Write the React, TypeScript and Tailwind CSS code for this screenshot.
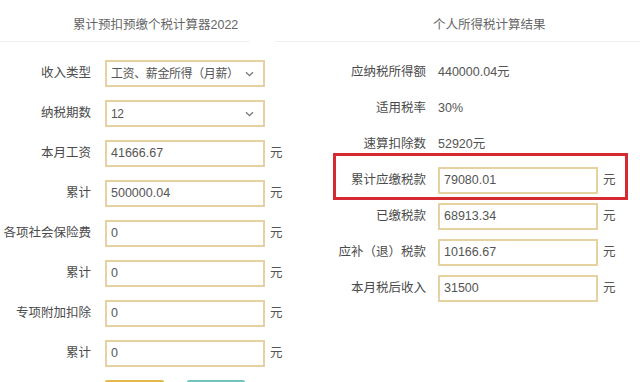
const font = { fontFamily: '"Liberation Sans", "Noto Sans CJK SC", sans-serif' };

const leftRows = [
  { label: "本月工资", value: "41666.67" },
  { label: "累计", value: "500000.04" },
  { label: "各项社会保险费", value: "0" },
  { label: "累计", value: "0" },
  { label: "专项附加扣除", value: "0" },
  { label: "累计", value: "0" },
];

function Chevron() {
  return (
    <svg width="9" height="6" viewBox="0 0 9 6" className="shrink-0">
      <path d="M1 1.2 L4.5 4.6 L8 1.2" fill="none" stroke="#777" strokeWidth="1.3" />
    </svg>
  );
}

function Box({ value, select }: { value: string; select?: boolean }) {
  return (
    <div className="flex h-[27px] w-[160px] items-center justify-between border-2 border-[#e6d2a1] bg-white pl-[4px] pr-[9px] text-[#555]">
      <span className={select ? "whitespace-nowrap text-[12px] tracking-[-0.4px]" : "whitespace-nowrap"}>{value}</span>
      {select && <Chevron />}
    </div>
  );
}

function LeftRow({ label, value, select }: { label: string; value: string; select?: boolean }) {
  return (
    <div className="flex h-[27px] items-center">
      <div className="w-[91px] whitespace-nowrap text-right text-[#4a4a4a]">{label}</div>
      <div className="ml-[14px]">
        <Box value={value} select={select} />
      </div>
      {!select && <span className="ml-[5px] text-[#555]">元</span>}
    </div>
  );
}

function RightRow({ label, value, input }: { label: string; value: string; input?: boolean }) {
  return (
    <div className="flex h-[27px] items-center">
      <div className="w-[106px] whitespace-nowrap text-right text-[#4a4a4a]">{label}</div>
      <div className="ml-[12px]">
        {input ? <Box value={value} /> : <span className="text-[#555]">{value}</span>}
      </div>
      {input && <span className="ml-[5px] text-[#555]">元</span>}
    </div>
  );
}

export default function App() {
  return (
    <div className="h-[382px] w-[640px] overflow-hidden bg-white text-[12.5px]" style={font}>
      <div className="flex h-[42px]">
        <div className="w-[250px] border-b border-[#f0f0f0] pl-[73px] pt-[16px] leading-[18px] text-[#666]">
          累计预扣预缴个税计算器2022
        </div>
        <div className="ml-[25px] flex-1 border-b border-[#f0f0f0] pl-[158px] pt-[16px] leading-[18px] text-[#666]">
          个人所得税计算结果
        </div>
      </div>

      <div className="flex">
        <div className="flex w-[320px] flex-col gap-[13px] pt-[18px]">
          <LeftRow label="收入类型" value="工资、薪金所得（月薪）" select />
          <LeftRow label="纳税期数" value="12" select />
          {leftRows.map((r, i) => (
            <LeftRow key={i} label={r.label} value={r.value} />
          ))}
          <div className="ml-[105px] flex gap-[23px]">
            <div className="h-[30px] w-[59px] rounded-[2px] bg-[#e2b94b]" />
            <div className="h-[30px] w-[58px] rounded-[2px] bg-[#74c4bc]" />
          </div>
        </div>

        <div className="flex flex-1 flex-col gap-[9px] pt-[17px]">
          <RightRow label="应纳税所得额" value="440000.04元" />
          <RightRow label="适用税率" value="30%" />
          <RightRow label="速算扣除数" value="52920元" />
          <div className="relative">
            <RightRow label="累计应缴税款" value="79080.01" input />
            <div className="absolute -top-[14px] -bottom-[6px] left-[13px] right-[12px] border-[3px] border-[#d52a31]" />
          </div>
          <RightRow label="已缴税款" value="68913.34" input />
          <RightRow label="应补（退）税款" value="10166.67" input />
          <RightRow label="本月税后收入" value="31500" input />
        </div>
      </div>
    </div>
  );
}
